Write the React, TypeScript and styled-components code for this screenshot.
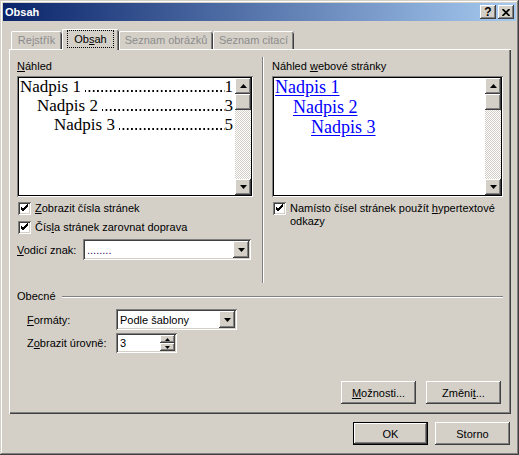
import React from 'react'
import styled, {createGlobalStyle, css} from 'styled-components'

const GlobalStyle = createGlobalStyle`
  html, body { margin: 0; padding: 0; }
  body {
    background: #d4d0c8;
    font-family: "Liberation Sans", Arial, sans-serif;
    font-size: 11px;
    color: #000;
  }
  u { text-decoration: underline; text-underline-offset: 1px; }
`

const raised = css`
  background: #d4d0c8;
  box-shadow: inset -1px -1px #404040, inset 1px 1px #fff, inset -2px -2px #808080, inset 2px 2px #d4d0c8;
`

const sunken = css`
  background: #fff;
  box-shadow: inset 1px 1px #808080, inset -1px -1px #fff, inset 2px 2px #404040, inset -2px -2px #d4d0c8;
`

const Window = styled.div`
  width: 519px;
  height: 455px;
  box-sizing: border-box;
  padding: 3px;
  display: flex;
  flex-direction: column;
  background: #d4d0c8;
  box-shadow: inset -1px -1px #404040, inset 1px 1px #d4d0c8, inset -2px -2px #808080, inset 2px 2px #fff;
`

const TitleBar = styled.div`
  height: 18px;
  flex: none;
  display: flex;
  align-items: center;
  gap: 2px;
  padding: 0 2px;
  background: linear-gradient(90deg, #0a246a, #a6caf0);
`

const Title = styled.div`
  flex: 1;
  color: #fff;
  font-weight: bold;
  font-size: 11px;
`

const CaptionButton = styled.div`
  ${raised}
  width: 16px;
  height: 14px;
  display: flex;
  align-items: center;
  justify-content: center;
  font-weight: bold;
  font-size: 12px;
  line-height: 1;
`

const Body = styled.div`
  flex: 1;
  display: flex;
  flex-direction: column;
  padding: 8px 5px 0 6px;
`

const TabRow = styled.div`
  display: flex;
  align-items: flex-end;
  height: 20px;
  padding-left: 2px;
  position: relative;
  z-index: 1;
`

const Tab = styled.div<{$w: number; $active?: boolean}>`
  width: ${p => p.$w}px;
  height: ${p => (p.$active ? 21 : 18)}px;
  margin-bottom: ${p => (p.$active ? -1 : 0)}px;
  box-sizing: border-box;
  display: flex;
  align-items: center;
  justify-content: center;
  padding-bottom: ${p => (p.$active ? 1 : 0)}px;
  background: #d4d0c8;
  color: ${p => (p.$active ? '#000' : '#8c8c8c')};
  border-radius: 2px 2px 0 0;
  box-shadow: inset 1px 0 #fff, inset 0 1px #fff, inset -1px 0 #404040, inset -2px 0 #808080;
`

const FocusRing = styled.span`
  outline: 1px dotted #000;
  padding: 2px 6px 2px;
`

const Panel = styled.div`
  height: 365px;
  box-sizing: border-box;
  display: flex;
  flex-direction: column;
  padding: 11px 8px 10px 8px;
  box-shadow: inset 1px 1px #fff, inset -1px -1px #404040, inset -2px -2px #808080;
`

const TopGrid = styled.div`
  display: grid;
  grid-template-columns: 236px 1fr 231px;
  align-items: start;
`

const Separator = styled.div`
  justify-self: center;
  width: 0;
  height: 226px;
  margin-top: -3px;
  border-left: 1px solid #808080;
  border-right: 1px solid #fff;
`

const Column = styled.div`
  display: flex;
  flex-direction: column;
`

const FieldLabel = styled.div`
  line-height: 13px;
  margin-bottom: 3px;
  white-space: nowrap;
`

const PreviewBox = styled.div`
  height: 121px;
  box-sizing: border-box;
  padding: 2px;
  display: flex;
  background: #fff;
  box-shadow: inset 1px 1px #808080, inset -1px -1px #fff, inset 2px 2px #000, inset -2px -2px #000;
`

const PreviewContent = styled.div`
  flex: 1;
  min-width: 0;
  padding: 0 2px 0 1px;
  font-family: "Liberation Serif", "Times New Roman", serif;
  font-size: 17px;
  line-height: 19px;
  margin-top: -1px;
`

const TocLine = styled.div<{$level: number}>`
  display: flex;
  padding-left: ${p => p.$level * 17}px;
  white-space: nowrap;
`

/* dotted tab leader between heading and page number */
const Leader = styled.span`
  flex: 1;
  align-self: flex-end;
  height: 2px;
  margin: 0 0 4px 4px;
  background: radial-gradient(circle at 1px 1px, #000 0.8px, transparent 1.1px) right bottom / 4.25px 2px repeat-x;
`

const WebLine = styled.div<{$level: number}>`
  padding-left: ${p => p.$level * 18}px;
  white-space: nowrap;
  font-size: 18px;
  line-height: 20px;
  a {
    color: #0000ff;
    text-decoration: underline;
    text-underline-offset: 2px;
  }
`

const ScrollBar = styled.div`
  width: 16px;
  flex: none;
  display: flex;
  flex-direction: column;
  background: repeating-conic-gradient(#d4d0c8 0 25%, #fff 0 50%) 0 0 / 2px 2px;
`

const ScrollButton = styled.div`
  ${raised}
  height: 16px;
  flex: none;
  display: flex;
  align-items: center;
  justify-content: center;
`

const Thumb = styled.div`
  ${raised}
  height: 16px;
  flex: none;
`

const Track = styled.div`
  flex: 1;
`

const CheckRow = styled.div<{$top: number}>`
  display: flex;
  align-items: flex-start;
  gap: 4px;
  margin-top: ${p => p.$top}px;
  margin-left: 1px;
  line-height: 13px;
`

const CheckBox = styled.div`
  ${sunken}
  width: 13px;
  height: 13px;
  flex: none;
  box-sizing: border-box;
  svg { display: block; }
`

const InlineRow = styled.div<{$top: number; $indent?: number; $label: number}>`
  display: flex;
  align-items: center;
  margin-top: ${p => p.$top}px;
  padding-left: ${p => p.$indent || 0}px;
  & > span:first-child {
    width: ${p => p.$label}px;
    flex: none;
    white-space: nowrap;
  }
`

const Combo = styled.div<{$w: number; $h?: number}>`
  ${sunken}
  width: ${p => p.$w}px;
  height: ${p => p.$h || 21}px;
  box-sizing: border-box;
  padding: 2px;
  display: flex;
`

const ComboText = styled.div<{$color?: string}>`
  flex: 1;
  padding-left: 2px;
  display: flex;
  align-items: center;
  color: ${p => p.$color || '#000'};
  white-space: nowrap;
`

const DropButton = styled.div`
  ${raised}
  width: 16px;
  flex: none;
  display: flex;
  align-items: center;
  justify-content: center;
`

const SpinButtons = styled.div`
  width: 15px;
  flex: none;
  display: flex;
  flex-direction: column;
`

const SpinButton = styled.div`
  ${raised}
  flex: 1;
  display: flex;
  align-items: center;
  justify-content: center;
`

const GroupHeading = styled.div`
  display: flex;
  align-items: center;
  margin-top: 7px;
  line-height: 13px;
`

const GroupLine = styled.div`
  flex: 1;
  margin-left: 6px;
  border-top: 1px solid #808080;
  border-bottom: 1px solid #fff;
`

const ButtonRow = styled.div<{$gap: number; $right: number}>`
  display: flex;
  justify-content: flex-end;
  gap: ${p => p.$gap}px;
  padding-right: ${p => p.$right}px;
`

const PanelButtons = styled(ButtonRow)`
  margin-top: auto;
`

const DialogButtons = styled(ButtonRow)`
  margin-top: 8px;
`

const Button = styled.div<{$default?: boolean}>`
  ${raised}
  width: 75px;
  height: 23px;
  display: flex;
  align-items: center;
  justify-content: center;
  ${p =>
    p.$default &&
    css`
      box-shadow: inset 0 0 0 1px #000, inset -2px -2px #404040, inset 2px 2px #fff, inset -3px -3px #808080;
    `}
`

const Arrow = ({dir, size = 7}: {dir: 'up' | 'down'; size?: number}) => {
  const h = Math.ceil(size / 2)
  const pts = dir === 'up' ? `0,${h} ${size},${h} ${size / 2},0` : `0,0 ${size},0 ${size / 2},${h}`
  return (
    <svg width={size} height={h} viewBox={`0 0 ${size} ${h}`}>
      <polygon points={pts} fill="#000" />
    </svg>
  )
}

const Check = () => (
  <CheckBox>
    <svg width="13" height="13" viewBox="0 0 13 13" shapeRendering="crispEdges">
      {[0, 1, 2].map(d => (
        <polyline key={d} points={`3,${5 + d} 5,${7 + d} 10,${2 + d}`} fill="none" stroke="#000" strokeWidth="1" />
      ))}
    </svg>
  </CheckBox>
)

const Scroller = () => (
  <ScrollBar>
    <ScrollButton><Arrow dir="up" /></ScrollButton>
    <Thumb />
    <Track />
    <ScrollButton><Arrow dir="down" /></ScrollButton>
  </ScrollBar>
)

const tabs = [
  {key: 'rejstrik', label: <>Rejstřík</>, w: 51},
  {key: 'obsah', label: <FocusRing>Ob<u>s</u>ah</FocusRing>, w: 57, active: true},
  {key: 'obrazky', label: <>Seznam obrázků</>, w: 94},
  {key: 'citace', label: <>Seznam citací</>, w: 81},
]

const headings = [
  {name: 'Nadpis 1', page: 1},
  {name: 'Nadpis 2', page: 3},
  {name: 'Nadpis 3', page: 5},
]

export default function App() {
  return (
    <>
      <GlobalStyle />
      <Window>
        <TitleBar>
          <Title>Obsah</Title>
          <CaptionButton>?</CaptionButton>
          <CaptionButton>
            <svg width="8" height="7" viewBox="0 0 8 7">
              <path d="M0.5 0 L7.5 7 M7.5 0 L0.5 7" stroke="#000" strokeWidth="1.7" />
            </svg>
          </CaptionButton>
        </TitleBar>
        <Body>
          <TabRow>
            {tabs.map(t => (
              <Tab key={t.key} $w={t.w} $active={t.active}>{t.label}</Tab>
            ))}
          </TabRow>
          <Panel>
            <TopGrid>
              <Column>
                <FieldLabel><u>N</u>áhled</FieldLabel>
                <PreviewBox>
                  <PreviewContent>
                    {headings.map((h, i) => (
                      <TocLine key={h.name} $level={i}>
                        <span>{h.name}</span>
                        <Leader />
                        <span>{h.page}</span>
                      </TocLine>
                    ))}
                  </PreviewContent>
                  <Scroller />
                </PreviewBox>
                <CheckRow $top={5}>
                  <Check />
                  <span><u>Z</u>obrazit čísla stránek</span>
                </CheckRow>
                <CheckRow $top={6}>
                  <Check />
                  <span>Čís<u>l</u>a stránek zarovnat doprava</span>
                </CheckRow>
                <InlineRow $top={5} $label={66} $indent={0}>
                  <span><u>V</u>odicí znak:</span>
                  <Combo $w={168}>
                    <ComboText $color="#2a0a5e">........</ComboText>
                    <DropButton><Arrow dir="down" /></DropButton>
                  </Combo>
                </InlineRow>
              </Column>
              <Separator />
              <Column>
                <FieldLabel>Náhled <u>w</u>ebové stránky</FieldLabel>
                <PreviewBox>
                  <PreviewContent>
                    {headings.map((h, i) => (
                      <WebLine key={h.name} $level={i}>
                        <a>{h.name}</a>
                      </WebLine>
                    ))}
                  </PreviewContent>
                  <Scroller />
                </PreviewBox>
                <CheckRow $top={5}>
                  <Check />
                  <span>
                    Namísto čísel stránek použít <u>h</u>ypertextové
                    <br />
                    odkazy
                  </span>
                </CheckRow>
              </Column>
            </TopGrid>
            <GroupHeading>
              <span>Obecné</span>
              <GroupLine />
            </GroupHeading>
            <InlineRow $top={6} $indent={10} $label={89}>
              <span><u>F</u>ormáty:</span>
              <Combo $w={121}>
                <ComboText>Podle šablony</ComboText>
                <DropButton><Arrow dir="down" /></DropButton>
              </Combo>
            </InlineRow>
            <InlineRow $top={3} $indent={10} $label={89}>
              <span>Z<u>o</u>brazit úrovně:</span>
              <Combo $w={61} $h={20}>
                <ComboText>3</ComboText>
                <SpinButtons>
                  <SpinButton><Arrow dir="up" size={5} /></SpinButton>
                  <SpinButton><Arrow dir="down" size={5} /></SpinButton>
                </SpinButtons>
              </Combo>
            </InlineRow>
            <PanelButtons $gap={10} $right={2}>
              <Button><span><u>M</u>ožnosti...</span></Button>
              <Button><span>Změni<u>t</u>...</span></Button>
            </PanelButtons>
          </Panel>
          <DialogButtons $gap={7} $right={1}>
            <Button $default>OK</Button>
            <Button>Storno</Button>
          </DialogButtons>
        </Body>
      </Window>
    </>
  )
}
